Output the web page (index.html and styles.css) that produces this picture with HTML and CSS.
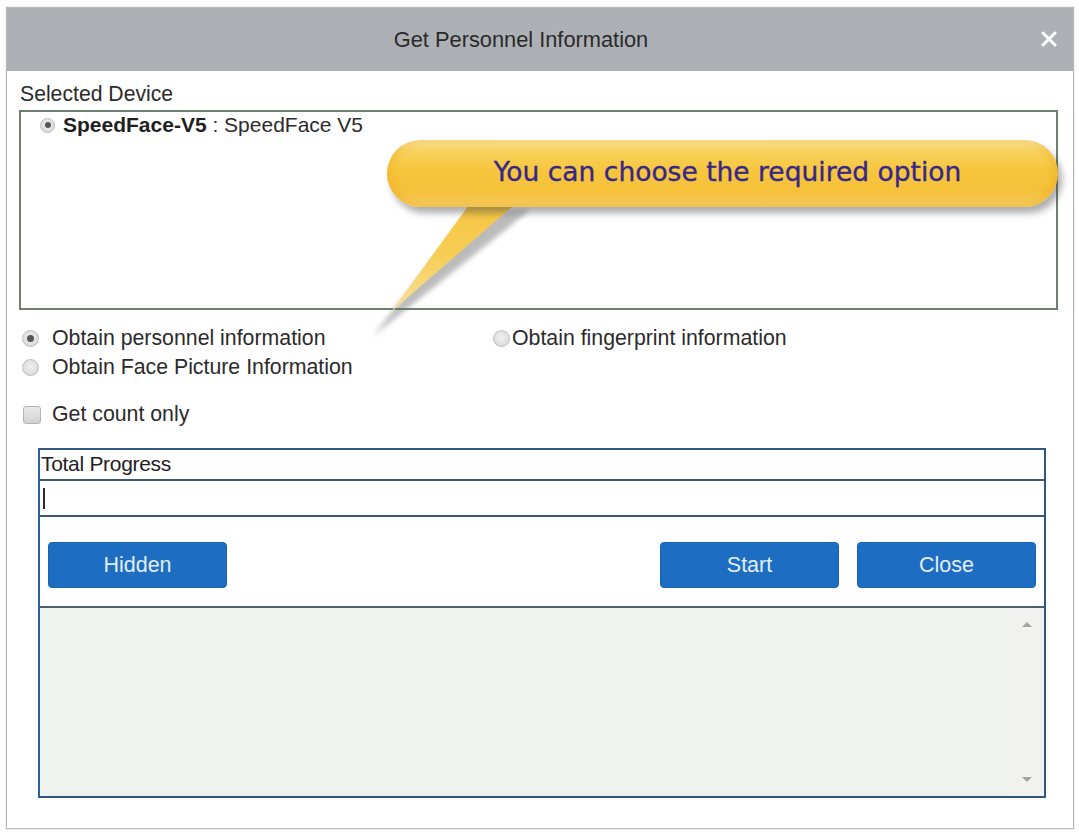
FILE: index.html
```html
<!DOCTYPE html>
<html>
<head>
<meta charset="utf-8">
<title>Get Personnel Information</title>
<link rel="stylesheet" href="styles.css">
</head>
<body>
<div class="dialog">
  <div class="titlebar">
    <span class="title">Get Personnel Information</span>
    <svg class="close" width="16" height="16" viewBox="0 0 16 16" aria-label="Close">
      <path d="M2 2 L14 14 M14 2 L2 14" stroke="#ffffff" stroke-width="3" stroke-linecap="round"/>
    </svg>
  </div>
  <div class="content">
    <div class="label">Selected Device</div>
    <div class="device-list">
      <div class="device"><span class="radio small checked"></span><b>SpeedFace-V5</b>&nbsp;: SpeedFace V5</div>
    </div>
    <div class="options">
      <div class="opt-col">
        <div class="opt"><span class="radio checked"></span>Obtain personnel information</div>
        <div class="opt"><span class="radio"></span>Obtain Face Picture Information</div>
      </div>
      <div class="opt-col second">
        <div class="opt tight"><span class="radio"></span>Obtain fingerprint information</div>
      </div>
    </div>
    <div class="opt check-row"><span class="checkbox"></span>Get count only</div>
    <div class="progress">
      <div class="pp-label">Total Progress</div>
      <div class="pp-input"><span class="caret"></span></div>
      <div class="pp-buttons">
        <button class="btn">Hidden</button>
        <span class="spacer"></span>
        <button class="btn">Start</button>
        <button class="btn">Close</button>
      </div>
      <div class="pp-log">
        <div class="scrollbar">
          <span class="arrow up"></span>
          <span class="arrow down"></span>
        </div>
      </div>
    </div>
  </div>
</div>

<svg class="callout-tail" width="200" height="160" viewBox="360 190 200 160">
  <defs>
    <linearGradient id="tailg" x1="0" y1="0" x2="0" y2="1">
      <stop offset="0" stop-color="#f6c540"/>
      <stop offset="0.5" stop-color="#f7cd55"/>
      <stop offset="1" stop-color="#f7e2a0"/>
    </linearGradient>
    <filter id="blur" x="-20%" y="-20%" width="140%" height="140%">
      <feGaussianBlur stdDeviation="2.5"/>
    </filter>
  </defs>
  <polygon points="472,210 530,210 373,336" fill="#6a6a6a" opacity="0.45" filter="url(#blur)"/>
  <polygon points="474,198 522,198 391,312" fill="url(#tailg)"/>
</svg>
<div class="callout-bubble"><span class="callout-text">You can choose the required option</span></div>
</body>
</html>
```

FILE: styles.css
```css
html, body {
  margin: 0;
  padding: 0;
  background: #ffffff;
}

body {
  font-family: "Liberation Sans", Arial, sans-serif;
  color: #2b2b2b;
  width: 1079px;
  height: 832px;
  overflow: hidden;
}

.dialog {
  margin: 7px 0 0 6px;
  width: 1066px;
  height: 820px;
  border: 1px solid #b9b9b9;
  box-shadow: 0 0 2px rgba(0, 0, 0, 0.18);
  background: #ffffff;
  display: flex;
  flex-direction: column;
}

.titlebar {
  height: 63px;
  background: #adb1b5;
  display: flex;
  align-items: center;
  justify-content: center;
  padding: 0 24px 0 0;
  position: relative;
}

.title {
  font-size: 21.8px;
  color: #2a2a2a;
  margin-right: 14px;
}

.close {
  position: absolute;
  right: 16px;
  top: 23px;
}

.content {
  padding: 11px 15px 0 12px;
  display: flex;
  flex-direction: column;
}

.label {
  font-size: 21.2px;
  line-height: 24px;
  padding-left: 1px;
}

.device-list {
  margin-top: 4px;
  height: 195px;
  border: 2px solid #6e7e70;
  padding: 1px 0 0 19px;
}

.device {
  font-size: 21px;
  line-height: 24px;
  display: flex;
  align-items: center;
}

.device b {
  color: #1f1f1f;
}

.radio {
  width: 17px;
  height: 17px;
  box-sizing: border-box;
  border-radius: 50%;
  border: 1px solid #bdbdbd;
  background: radial-gradient(circle at 50% 45%, #f1f1f1 0%, #dcdcdc 70%, #cfcfcf 100%);
  display: inline-flex;
  align-items: center;
  justify-content: center;
  flex: none;
  margin-right: 13px;
}

.radio.checked::after {
  content: "";
  width: 7px;
  height: 7px;
  border-radius: 50%;
  background: #585858;
}

.radio.small {
  width: 15px;
  height: 15px;
  margin-right: 8px;
}

.radio.small.checked::after {
  width: 6px;
  height: 6px;
}

.options {
  margin-top: 14px;
  display: flex;
}

.opt-col {
  display: flex;
  flex-direction: column;
  width: 471px;
}

.opt {
  font-size: 21.3px;
  line-height: 29px;
  height: 29px;
  display: flex;
  align-items: center;
  padding-left: 3px;
}

.opt.tight .radio {
  margin-right: 2px;
}

.check-row {
  margin-top: 18px;
  padding-left: 4px;
}

.checkbox {
  width: 18px;
  height: 18px;
  box-sizing: border-box;
  border-radius: 3px;
  border: 1px solid #b3b3b3;
  background: linear-gradient(#e9e9e9, #d2d2d2);
  margin-right: 11px;
  flex: none;
}

.progress {
  margin: 19px 0 0 19px;
  width: 1008px;
  height: 350px;
  box-sizing: border-box;
  border: 2px solid #33577f;
  border-left-color: #2a5f98;
  display: flex;
  flex-direction: column;
}

.pp-label {
  height: 29px;
  font-size: 21px;
  line-height: 27px;
  color: #222;
  letter-spacing: -0.3px;
  padding-left: 1px;
}

.pp-input {
  height: 38px;
  box-sizing: border-box;
  border-top: 2px solid #3f5772;
  border-bottom: 2px solid #3f5772;
  display: flex;
  align-items: center;
  padding-left: 3px;
  background: #ffffff;
}

.caret {
  width: 2px;
  height: 21px;
  background: #2a2a2a;
}

.pp-buttons {
  height: 91px;
  box-sizing: border-box;
  padding: 25px 8px 20px 8px;
  display: flex;
  gap: 18px;
  border-bottom: 2px solid #4a5d74;
}

.spacer {
  flex: 1;
}

.btn {
  width: 179px;
  height: 46px;
  border: 1px solid #1862b2;
  border-radius: 4px;
  background: #1d6ec3;
  color: #e2edf8;
  font-family: "Liberation Sans", Arial, sans-serif;
  font-size: 21.5px;
  padding: 0;
}

.pp-log {
  flex: 1;
  background: #eff3ee;
  display: flex;
  justify-content: flex-end;
}

.scrollbar {
  width: 34px;
  display: flex;
  flex-direction: column;
  justify-content: space-between;
  align-items: center;
  padding: 14px 0 14px 0;
  background: #f1f2f0;
}

.arrow {
  width: 0;
  height: 0;
  border-left: 5px solid transparent;
  border-right: 5px solid transparent;
}

.arrow.up {
  border-bottom: 5px solid #a3a3a3;
}

.arrow.down {
  border-top: 5px solid #a3a3a3;
}

/* callout overlay */
.callout-tail {
  position: absolute;
  left: 360px;
  top: 190px;
}

.callout-bubble {
  position: absolute;
  left: 387px;
  top: 140px;
  width: 671px;
  height: 67px;
  border-radius: 34px;
  background:
    linear-gradient(180deg, #fde8a4 0%, #f9d35c 18%, #f6c63d 45%, #f5c23a 75%, #f7cf66 100%);
  box-shadow: 4px 6px 7px rgba(70, 70, 70, 0.45), inset 0 0 14px rgba(230, 155, 15, 0.5);
  display: flex;
  align-items: center;
  justify-content: center;
}

.callout-text {
  font-family: "DejaVu Sans", Verdana, sans-serif;
  font-size: 26.5px;
  color: #37268a;
  -webkit-text-stroke: 0.35px #37268a;
  margin-left: 10px;
  margin-top: -4px;
}
```
